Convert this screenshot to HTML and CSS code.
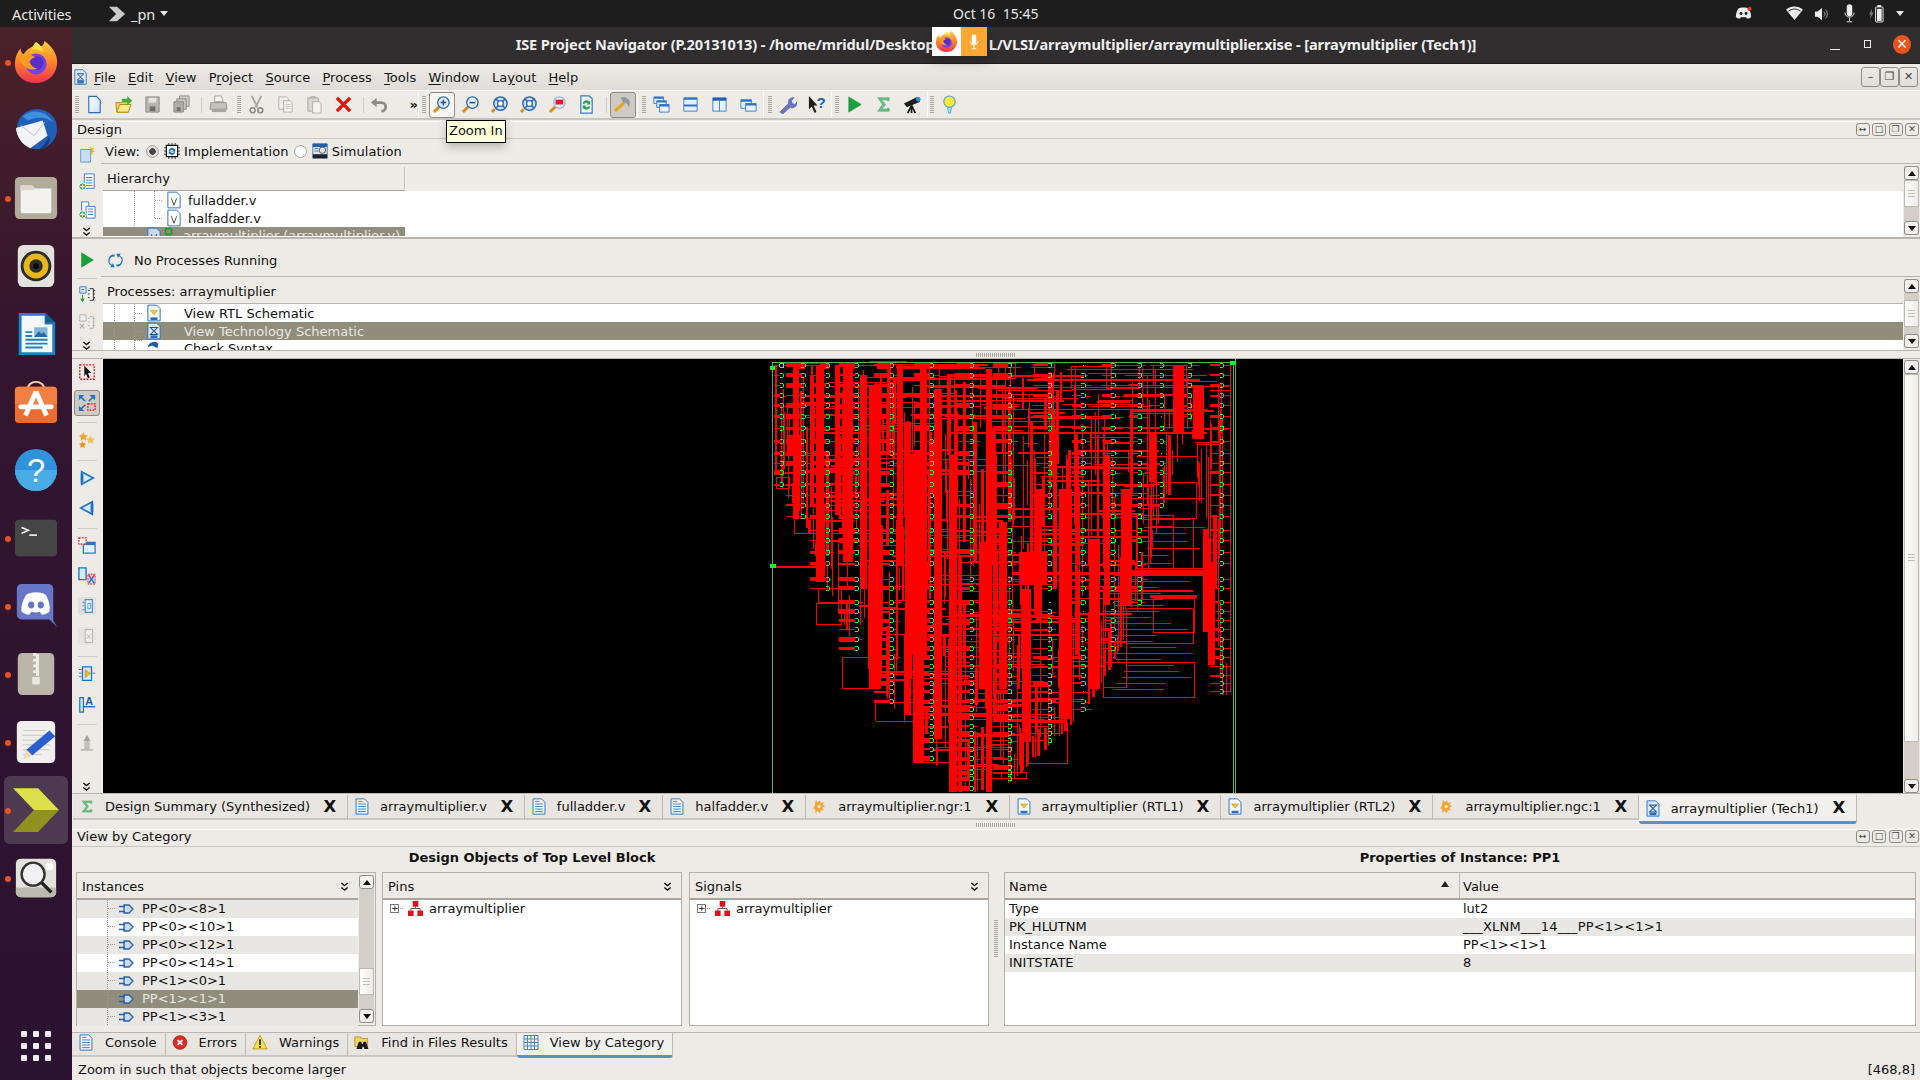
FILE: index.html
```html
<!DOCTYPE html>
<html lang="en">
<head>
<meta charset="utf-8">
<title>ISE Project Navigator</title>
<link rel="stylesheet" href="styles.css">
<script src="app.js" defer></script>
</head>
<body>
<svg class="defs" width="0" height="0" aria-hidden="true">
<defs>
<linearGradient id="gDoc" x1="0" y1="0" x2="1" y2="1"><stop offset="0" stop-color="#fff"/><stop offset="1" stop-color="#cfe0f5"/></linearGradient>
<linearGradient id="gFf" x1="0" y1="0" x2="0" y2="1"><stop offset="0" stop-color="#ffd23a"/><stop offset=".45" stop-color="#ff8a2a"/><stop offset="1" stop-color="#f0304f"/></linearGradient>
<symbol id="new" viewBox="0 0 20 20"><path d="M4 1.5h8l4 4v13H4z" fill="url(#gDoc)" stroke="#2a6fc4" stroke-width="1.2"/></symbol>
<symbol id="open" viewBox="0 0 20 20"><path d="M2 8h6l1-2h6v12H3z" fill="#f4d35e" stroke="#b08a1a"/><path d="M3 18l3-8h12l-3 8z" fill="#fbe88a" stroke="#b08a1a"/><path d="M8 4h6V1l5 5-5 5V8H9z" fill="#3fae3a"/></symbol>
<symbol id="save" viewBox="0 0 20 20"><path d="M3 2h14v16H3z" fill="#b9b6b0" stroke="#8f8c86"/><path d="M6 3h8v5H6z" fill="#e8e6e2"/><path d="M7 12h6v5H7z" fill="#6f6d68"/></symbol>
<symbol id="saveall" viewBox="0 0 20 20"><path d="M8 1h10v11H8z" fill="#cfccc6" stroke="#8f8c86"/><path d="M5 4h10v11H5z" fill="#c6c3bd" stroke="#8f8c86"/><path d="M2 7h10v11H2z" fill="#b0ada7" stroke="#8f8c86"/><path d="M5 13h4v4H5z" fill="#6f6d68"/></symbol>
<symbol id="print" viewBox="0 0 20 20"><path d="M6 1h7l2 6H6z" fill="#f2f1ee" stroke="#a7a49e"/><path d="M2 8h16l1 7H1z" fill="#c4c1bb" stroke="#98958f"/><path d="M3 15h15v3H3z" fill="#a8a59f"/></symbol>
<symbol id="cut" viewBox="0 0 20 20"><path d="M5 1l6 12M15 1L9 13" stroke="#a9a6a0" stroke-width="2" fill="none"/><circle cx="6" cy="16" r="2.6" fill="none" stroke="#8b8882" stroke-width="1.6"/><circle cx="14" cy="16" r="2.6" fill="none" stroke="#8b8882" stroke-width="1.6"/></symbol>
<symbol id="copy" viewBox="0 0 20 20"><path d="M3 2h8l2 2v11H3z" fill="#f2f1ee" stroke="#b1aea8"/><path d="M8 6h7l2 2v10H8z" fill="#f2f1ee" stroke="#b1aea8"/><path d="M10 10h5M10 12h5M10 14h5" stroke="#c5c2bc"/></symbol>
<symbol id="paste" viewBox="0 0 20 20"><path d="M3 3h11v14H3z" fill="#dad7d1" stroke="#aaa7a1"/><path d="M6 1h5v3H6z" fill="#bbb8b2"/><path d="M8 7h7l2 2v10H8z" fill="#f4f3f0" stroke="#b1aea8"/></symbol>
<symbol id="del" viewBox="0 0 20 20"><path d="M3 3l14 14M17 3L3 17" stroke="#e3140e" stroke-width="3.6" fill="none"/></symbol>
<symbol id="undo" viewBox="0 0 20 20"><path d="M5 8h7a4 4 0 0 1 0 9" stroke="#8e8b85" stroke-width="3" fill="none"/><path d="M7 3v10L1 8z" fill="#8e8b85"/></symbol>
<symbol id="zi" viewBox="0 0 20 20"><path d="M2 18l6-6" stroke="#dc8a1e" stroke-width="3"/><circle cx="12" cy="8" r="6" fill="#dfeafa" stroke="#2f6cb4" stroke-width="1.4"/><path d="M9 8h6M12 5v6" stroke="#24508c" stroke-width="1.6"/></symbol>
<symbol id="zo" viewBox="0 0 20 20"><path d="M2 18l6-6" stroke="#dc8a1e" stroke-width="3"/><circle cx="12" cy="8" r="6" fill="#dfeafa" stroke="#2f6cb4" stroke-width="1.4"/><path d="M9 8h6" stroke="#24508c" stroke-width="1.6"/></symbol>
<symbol id="fit" viewBox="0 0 20 20"><path d="M2 18l3-3" stroke="#dc8a1e" stroke-width="3"/><circle cx="11" cy="9" r="7" fill="#cfe0f5" stroke="#2f6cb4" stroke-width="1.6"/><circle cx="11" cy="9" r="3" fill="#fff" stroke="#2f6cb4" stroke-width="1.4"/><path d="M6 4l3 3M16 4l-3 3M6 14l3-3M16 14l-3-3" stroke="#2f6cb4" stroke-width="1.6"/></symbol>
<symbol id="zs" viewBox="0 0 20 20"><path d="M2 18l6-6" stroke="#dc8a1e" stroke-width="3"/><circle cx="12" cy="8" r="6" fill="#dfeafa" stroke="#9db8d8" stroke-width="1.4"/><path d="M8 5h8v5H8z" fill="#e8142a"/></symbol>
<symbol id="ref" viewBox="0 0 20 20"><path d="M4 1h9l3 3v15H4z" fill="#eef5fd" stroke="#3b7cc6" stroke-width="1.3"/><path d="M6 9a4 4 0 0 1 7-2l1-1v4h-4l1.400-1.400A2.500 2.500 0 0 0 7.500 10zM14 12a4 4 0 0 1-7 2l-1 1v-4h4l-1.400 1.400a2.500 2.500 0 0 0 3.400-.4z" fill="#2aa63c"/></symbol>
<symbol id="ham" viewBox="0 0 20 20"><path d="M2 17L13 7" stroke="#e5a51f" stroke-width="3.2"/><path d="M8 3c4-2 7-1 10 4l-1 6c-2-4-4-6-6-5z" fill="#8f9aa8"/></symbol>
<symbol id="wc" viewBox="0 0 20 20"><path d="M2 2h10v7H2z" fill="#e7f0fb" stroke="#3a80cf"/><path d="M5 6h10v7H5z" fill="#e7f0fb" stroke="#3a80cf"/><path d="M8 10h10v8H8z" fill="#e7f0fb" stroke="#3a80cf"/><path d="M2 2h10v2H2zM5 6h10v2H5zM8 10h10v2H8z" fill="#2f74c4"/></symbol>
<symbol id="wh" viewBox="0 0 20 20"><path d="M3 3h14v14H3z" fill="#e7f0fb" stroke="#3a80cf"/><path d="M3 3h14v2H3zM3 10h14v2H3z" fill="#2f74c4"/></symbol>
<symbol id="wv" viewBox="0 0 20 20"><path d="M3 3h14v14H3z" fill="#e7f0fb" stroke="#3a80cf"/><path d="M3 3h14v3H3z" fill="#1f5fb0"/><path d="M10 6v11" stroke="#3a80cf"/></symbol>
<symbol id="wa" viewBox="0 0 20 20"><path d="M2 5h11v9H2z" fill="#e7f0fb" stroke="#3a80cf"/><path d="M7 9h11v8H7z" fill="#e7f0fb" stroke="#3a80cf"/><path d="M2 5h11v2H2zM7 9h11v2H7z" fill="#2f74c4"/></symbol>
<symbol id="wr" viewBox="0 0 20 20"><path d="M2 18l9-9c-1-4 2-7 6-6l-3 3 1 3 3 1 2-3c1 4-3 8-7 6l-8 7z" fill="#6a74c4" stroke="#4c559c" stroke-width=".6"/></symbol>
<symbol id="hlp" viewBox="0 0 20 20"><path d="M2 1l9 10H7l3 7-2 1-3-7-3 3z" fill="#1d1d1d"/><text x="10" y="14" font-size="16" font-weight="700" font-family="Liberation Sans" fill="#1b5fb5">?</text></symbol>
<symbol id="play" viewBox="0 0 20 20"><path d="M4 2l13 8-13 8z" fill="#17a33a" stroke="#108030" stroke-width=".6"/></symbol>
<symbol id="sig" viewBox="0 0 20 20"><path d="M4 3h12v3h-2V5H8l4 5-4 5h6v-1h2v3H4l5-7z" fill="#6cc28a" stroke="#3a9c5e" stroke-width=".6"/></symbol>
<symbol id="scope" viewBox="0 0 20 20"><path d="M1 9l14-7 3 5-14 6z" fill="#1b1b1b"/><circle cx="16" cy="4.500" r="2.500" fill="#2a8fc6"/><path d="M9 11L5 19M9 11l0 8M9 11l4 8" stroke="#1b1b1b" stroke-width="1.800"/></symbol>
<symbol id="bulb" viewBox="0 0 20 20"><circle cx="10" cy="7" r="6" fill="#fde93a" stroke="#4aa3d8" stroke-width="1.200"/><path d="M8 13h4l-1 6H9z" fill="#bfe0f2" stroke="#4aa3d8"/></symbol>
<symbol id="note" viewBox="0 0 20 20"><path d="M3 5h11v14H3z" fill="#c9ddf3" stroke="#5c93cf"/><path d="M14 1l1 3 3-1-2 3 3 1-3 1 1 3-3-2z" fill="#f5a623"/></symbol>
<symbol id="adds" viewBox="0 0 20 20"><path d="M7 1h11v16H7z" fill="#fff" stroke="#2f74c4"/><path d="M9 5h7M9 8h7M9 11h7M9 14h7" stroke="#2f74c4"/><circle cx="5" cy="15" r="4" fill="#2aa63c" stroke="#fff"/><path d="M2.500 15h5M5 12.500v5" stroke="#fff" stroke-width="1.400"/></symbol>
<symbol id="addc" viewBox="0 0 20 20"><path d="M4 1h8v12H4z" fill="#fff" stroke="#2f74c4"/><path d="M9 6h10v13H9z" fill="#fff" stroke="#2f74c4"/><path d="M11 9h6M11 12h6M11 15h6" stroke="#2f74c4"/><circle cx="5" cy="15" r="4" fill="#2aa63c" stroke="#fff"/><path d="M2.500 15h5M5 12.500v5" stroke="#fff" stroke-width="1.400"/></symbol>
<symbol id="chev" viewBox="0 0 10 10"><path d="M1.500 1L5 4l3.500-3M1.500 6L5 9l3.500-3" stroke="#111" stroke-width="1.500" fill="none"/></symbol>
<symbol id="sync" viewBox="0 0 20 20"><path d="M9 3A7 7 0 0 0 5 16l-1 2 5 0-2-5-1 2A5 5 0 0 1 9 5.500z" fill="#1e72c4"/><path d="M11 17a7 7 0 0 0 4-13l1-2-5 0 2 5 1-2a5 5 0 0 1-3 9.500z" fill="#1e72c4"/></symbol>
<symbol id="p1" viewBox="0 0 20 20"><path d="M2 2h7v7H2z" fill="#dcebfb" stroke="#2f74c4"/><path d="M4 5h3" stroke="#2f74c4"/><path d="M13 4h4v13h-4" fill="#f3f3f3" stroke="#222"/><path d="M11 6h2M11 10h2M11 14h2M17 6h2M17 10h2M17 14h2" stroke="#222"/><path d="M5 11v6M3 15l2 3 2-3" stroke="#18a23a" fill="none" stroke-width="1.300"/></symbol>
<symbol id="p2" viewBox="0 0 20 20"><path d="M2 2h7v7H2z" fill="#eee" stroke="#aaa"/><path d="M13 4h4v13h-4" fill="#eee" stroke="#aaa"/><path d="M11 6h2M11 10h2M11 14h2M17 6h2M17 10h2M17 14h2" stroke="#aaa"/><path d="M2 12l5 5M7 12l-5 5" stroke="#aaa" stroke-width="1.300"/></symbol>
<symbol id="sel" viewBox="0 0 20 20"><path d="M2 2h16v16H2z" fill="none" stroke="#e01818" stroke-width="1.500" stroke-dasharray="2 1.500"/><path d="M7 3l8 8h-4l2 5-2 1-2-5-2 3z" fill="#111"/></symbol>
<symbol id="net" viewBox="0 0 20 20"><path d="M3 3l5 5M17 3l-5 5M3 17l5-5" stroke="#1e72c4" stroke-width="1.800"/><path d="M1 1h6L1 7zM19 1h-6l6 6zM1 19h6l-6-6z" fill="#1e72c4"/><path d="M11 11h8v7h-8z" fill="none" stroke="#e01818" stroke-dasharray="2 1.200" stroke-width="1.400"/></symbol>
<symbol id="stars" viewBox="0 0 20 20"><path d="M6 1l1.500 3.500L11 5 8.500 7.500 9 11 6 9 3 11l.5-3.500L1 5l3.500-.5z" fill="#f0a530"/><path d="M14 5l1.500 3L19 8.500 16.500 11l.5 3-3-1.500-3 1.500.5-3L9 8.500l3.500-.5z" fill="#f6c04a"/><path d="M5 11l1.200 2.500 2.800.5-2 2 .5 3L5 17.500 2.500 19l.5-3-2-2 2.800-.5z" fill="#ec8f24"/></symbol>
<symbol id="gr" viewBox="0 0 20 20"><path d="M4 3l13 7-13 7z" fill="#d8e8fb" stroke="#1e72c4" stroke-width="1.800"/><path d="M3 5h3v10H3z" fill="#1e72c4"/></symbol>
<symbol id="gl" viewBox="0 0 20 20"><path d="M16 3L3 10l13 7z" fill="#d8e8fb" stroke="#1e72c4" stroke-width="1.800"/><path d="M14 5h3v10h-3z" fill="#1e72c4"/></symbol>
<symbol id="ws" viewBox="0 0 20 20"><path d="M6 6h13v12H6z" fill="#e7f0fb" stroke="#2f74c4" stroke-width="1.400"/><path d="M6 6h13v3H6z" fill="#2f74c4"/><path d="M1 1h8v7H1z" fill="#fff" stroke="#e01818" stroke-dasharray="2 1.200" stroke-width="1.300"/></symbol>
<symbol id="wx" viewBox="0 0 20 20"><path d="M1 1h8v13H1z" fill="#d8e8fb" stroke="#1e72c4" stroke-width="1.500"/><path d="M11 8h8v11h-8z" fill="#f2c7c0" stroke="#e01818" stroke-dasharray="2 1.200"/><path d="M12 9l6 9M18 9l-6 9" stroke="#2f5ea8" stroke-width="1.300"/></symbol>
<symbol id="ga1" viewBox="0 0 20 20"><path d="M0 0h20v20H0z" fill="#e2e0dc"/><path d="M5 6h2M5 10h2M5 14h2" stroke="#4c8fd2" stroke-width="1.300"/><path d="M8 3h8v14H8z" fill="#e8f2fc" stroke="#4c8fd2" stroke-width="1.300"/><path d="M11 7h3v6h-3z" fill="none" stroke="#4c8fd2"/></symbol>
<symbol id="ga2" viewBox="0 0 20 20"><path d="M0 0h20v20H0z" fill="#e6e4e0"/><path d="M8 3h8v14H8z" fill="#f0f0ee" stroke="#bdbbb6" stroke-width="1.300"/><path d="M10 8l4 5M14 8l-4 5" stroke="#bdbbb6"/></symbol>
<symbol id="blk" viewBox="0 0 20 20"><path d="M1 5h3M1 9h3M1 13h3M16 9h3" stroke="#1e72c4"/><path d="M5 2h10v15H5z" fill="#dbe9f9" stroke="#1e72c4" stroke-width="1.400"/><path d="M8 5l6 4.500L8 14z" fill="#eeb91f" stroke="#a9831a" stroke-width=".6"/></symbol>
<symbol id="att" viewBox="0 0 20 20"><path d="M2 3h4v16H2z" fill="#d8e8fb" stroke="#1e72c4" stroke-width="1.400"/><path d="M6 13h13" stroke="#1e72c4" stroke-width="1.600"/><text x="8" y="11" font-size="12" font-weight="700" font-family="Liberation Sans" fill="#1e5ea8">A</text></symbol>
<symbol id="fade" viewBox="0 0 20 20"><path d="M7 9h6v9H7z" fill="#c2c0ba"/><path d="M6 9l4-7 4 7z" fill="#a6a39d"/><path d="M3 18h14v1.500H3z" fill="#aeaba5"/></symbol>
<symbol id="lines" viewBox="0 0 16 20"><path d="M1 1h10l4 4v14H1z" fill="#eef5fd" stroke="#2f74c4" stroke-width="1.100"/><path d="M3.500 7h9M3.500 10h9M3.500 13h9M3.500 16h9M3.500 4h5" stroke="#2f74c4"/></symbol>
<symbol id="vfile" viewBox="0 0 16 20"><path d="M1 1h10l4 4v14H1z" fill="#fff" stroke="#2a6fc4" stroke-width="1.100"/><path d="M5 8l3 8 3-8" stroke="#333" fill="none"/></symbol>
<symbol id="vsel" viewBox="0 0 16 20"><path d="M1 1h10l4 4v14H1z" fill="#c8d8ec" stroke="#2a6fc4" stroke-width="1.100"/><path d="M5 8l3 8 3-8" stroke="#333" fill="none"/></symbol>
<symbol id="chip" viewBox="0 0 10 10"><path d="M2 2h6v6H2z" fill="none" stroke="#13a018" stroke-width="1.400"/><path d="M0 3h2M0 7h2M8 3h2M8 7h2M3 0v2M7 0v2M3 8v2M7 8v2" stroke="#13a018"/></symbol>
<symbol id="rtl" viewBox="0 0 16 20"><path d="M1 1h10l4 4v14H1z" fill="#f4f8fd" stroke="#2a6fc4" stroke-width="1.100"/><path d="M4 7h8L8 12z" fill="#f3c52c" stroke="#b78b12" stroke-width=".6"/><path d="M4 15h8v3H4z" fill="#2a6fc4"/></symbol>
<symbol id="tech" viewBox="0 0 16 20"><path d="M1 1h10l4 4v14H1z" fill="#dceafa" stroke="#2a6fc4" stroke-width="1.100"/><path d="M4 6h8L4 14h8z" fill="none" stroke="#1e4f94" stroke-width="1.200"/><path d="M4 15h8v3H4z" fill="#2a6fc4"/></symbol>
<symbol id="gear" viewBox="0 0 16 20"><path d="M3 2l2 3 3-2 1 3 4-1-2 3 3 2-3 1 1 4-3-1-1 4-3-3-2 3-1-5-2-1 2-3z" fill="#f2a43a"/><circle cx="7" cy="10" r="2" fill="#fbe4b0"/></symbol>
<symbol id="check" viewBox="0 0 16 20"><path d="M1 8a7 7 0 0 1 12-4l-1 5-6-3z" fill="#1e5ea8"/><path d="M13 14v6H3" stroke="#1e5ea8" fill="none"/></symbol>
<symbol id="err" viewBox="0 0 20 20"><circle cx="10" cy="10" r="8.500" fill="#e22a24" stroke="#a81510"/><path d="M7 7l6 6M13 7l-6 6" stroke="#fff" stroke-width="2.200"/></symbol>
<symbol id="warn" viewBox="0 0 20 20"><path d="M10 1l9 17H1z" fill="#fde23a" stroke="#a8921a"/><path d="M10 6v7M10 14.500v2" stroke="#111" stroke-width="2"/></symbol>
<symbol id="find" viewBox="0 0 20 20"><path d="M1 3h7l1 2h8v10H1z" fill="#f4d35e" stroke="#b08a1a"/><path d="M6 9h3l1 3h1l1-3h3l3 9h-5l-1-3h-1l-1 3H3z" fill="#1b1b1b"/></symbol>
<symbol id="grid" viewBox="0 0 16 16"><path d="M1 1h14v14H1z" fill="#f3f7fd" stroke="#4e87c7"/><path d="M1 4.500h14M1 8h14M1 11.500h14M4.500 1v14M8 1v14M11.500 1v14" stroke="#4e87c7"/></symbol>
<symbol id="gate" viewBox="0 0 16 12"><path d="M5 2h5l4 4-4 4H5z" fill="#c8dcf4" stroke="#2a5eaa" stroke-width="1.300"/><path d="M0 3.500h6M0 8.500h6" stroke="#2a5eaa" stroke-width="1.300"/></symbol>
<symbol id="hier" viewBox="0 0 16 16"><path d="M5 0h6v6H5zM0 10h6v6H0zM10 10h6v6h-6z" fill="#e2101c"/><path d="M8 6v2M3 10V8h10v2" stroke="#555" fill="none"/></symbol>
<symbol id="impl" viewBox="0 0 20 20"><path d="M3 3h14v14H3z" fill="#fff" stroke="#111" stroke-width="1.500"/><path d="M6 0v3M10 0v3M14 0v3M6 17v3M10 17v3M14 17v3M0 6h3M0 10h3M0 14h3M17 6h3M17 10h3M17 14h3" stroke="#111"/><path d="M6 10a4 4 0 0 1 7-2.500l1-1v4h-4l1.300-1.400A2.300 2.300 0 0 0 7.500 10.500zM14 11a4 4 0 0 1-7 2.500l-1 1v-4h4l-1.300 1.400A2.300 2.300 0 0 0 12.500 10.500z" fill="#1e72c4"/></symbol>
<symbol id="simu" viewBox="0 0 20 20"><path d="M1 1h18v18H1z" fill="#dfe9f5" stroke="#36639a"/><path d="M1 1h18v4H1z" fill="#1e5fa8"/><circle cx="13" cy="9" r="4" fill="#e6e6e6" stroke="#333"/><path d="M3 7h5M3 10h5" stroke="#1e5fa8"/><path d="M1 14h18v5H1z" fill="#20242a"/></symbol>
<symbol id="fox" viewBox="0 0 48 48"><path d="M24 6c6 4 8 0 9-4 5 4 12 10 13 20 1 14-9 24-22 24S1 37 2 24c.5-6 3-11 6-14 0 3 1 5 3 6 3-5 8-8 13-10z" fill="url(#gFf)"/><circle cx="24" cy="26" r="11" fill="#7542e5"/><circle cx="25" cy="25" r="7" fill="#5a2cc8"/><path d="M6 20c5-5 12-5 17-1-3 1-5 3-6 4 1 4 4 7 8 8-8 3-16-3-19-11z" fill="#ff9a1f"/><path d="M24 3c5 3 7 7 7 11-3-3-7-4-11-3 0-3 2-6 4-8z" fill="#ffe14a"/></symbol>
<symbol id="tbird" viewBox="0 0 48 48"><circle cx="25" cy="23" r="21" fill="#1f5fb8"/><path d="M10 10c8-8 24-8 32 6-8-6-18-6-26-2z" fill="#3f8fe0"/><path d="M3 22l28-8 5 16-18 13C10 40 4 32 3 22z" fill="#f3f4f7"/><path d="M8 19l14 11 11-14" fill="none" stroke="#b9c2d4"/><path d="M38 30c2 8-4 14-12 15 6-4 9-9 12-15z" fill="#173c86"/></symbol>
<symbol id="files" viewBox="0 0 48 48"><rect x="2" y="2" width="44" height="44" rx="5" fill="#b1ab9c"/><path d="M8 11h12l3 3h17v24a2 2 0 0 1-2 2H10a2 2 0 0 1-2-2z" fill="#f4f2ee"/><path d="M8 11h12l3 5H8z" fill="#dcd8d0"/></symbol>
<symbol id="rhy" viewBox="0 0 48 48"><rect x="5" y="2" width="38" height="44" rx="6" fill="#e4e2dc"/><circle cx="24" cy="24" r="16" fill="#2d2d2d"/><circle cx="24" cy="24" r="13" fill="#e8b81a"/><circle cx="24" cy="24" r="7" fill="#2d2d2d"/><circle cx="24" cy="24" r="3" fill="#000"/></symbol>
<symbol id="wrt" viewBox="0 0 48 48"><path d="M6 2h28l10 10v34H6z" fill="#1b82c4"/><path d="M9 5h24v9h8v29H9z" fill="#f5f8fb"/><path d="M34 2l10 10H34z" fill="#0f5c93"/><path d="M13 22h7M13 26h7M13 30h23M13 34h23M13 38h18" stroke="#1b82c4" stroke-width="2"/><path d="M22 17h14v10H22z" fill="#7fb6dc"/><path d="M22 27l5-6 3 3 2-2 4 5z" fill="#2c6a96"/></symbol>
<symbol id="shop" viewBox="0 0 48 48"><path d="M15 12c0-12 18-12 18 0" fill="none" stroke="#f2d5b0" stroke-width="2"/><rect x="2" y="8" width="44" height="38" rx="4" fill="#ee6c2c"/><path d="M2 12a4 4 0 0 1 4-4h36a4 4 0 0 1 4 4v14H2z" fill="#f38042"/><path d="M24 13L13 38M24 13l11 25" stroke="#fff" stroke-width="5" fill="none"/><path d="M8 29h32" stroke="#fff" stroke-width="5" stroke-linecap="round"/></symbol>
<symbol id="help" viewBox="0 0 48 48"><circle cx="24" cy="24" r="22" fill="#2f94dc"/><path d="M2 24a22 22 0 0 0 44 0z" fill="#49ace6"/><text x="24" y="36" font-size="34" text-anchor="middle" font-family="Liberation Sans" fill="#fff">?</text></symbol>
<symbol id="term" viewBox="0 0 48 48"><rect x="2" y="5" width="44" height="38" rx="4" fill="#454545"/><path d="M9 13l7 3-7 3" stroke="#fff" fill="none" stroke-width="1.600"/><path d="M17 21h8" stroke="#fff" stroke-width="1.600"/></symbol>
<symbol id="disc" viewBox="0 0 48 48"><path d="M4 6a5 5 0 0 1 5-5h28a5 5 0 0 1 5 5v33l4 7-8-8H9a5 5 0 0 1-5-5z" fill="#6577c6"/><path d="M14 12c6-3 14-3 20 0 3 5 5 11 4 18-3 2-5 3-8 3l-2-3c-3 1-6 1-9 0l-2 3c-3 0-5-1-8-3-1-7 2-13 5-18z" fill="#fff"/><ellipse cx="19" cy="23" rx="3.200" ry="3.600" fill="#6577c6"/><ellipse cx="29" cy="23" rx="3.200" ry="3.600" fill="#6577c6"/></symbol>
<symbol id="arc" viewBox="0 0 48 48"><rect x="5" y="2" width="38" height="44" rx="5" fill="#b9b5a8"/><path d="M24 2h-3v3h3v3h-3v3h3v3h-3v3h3v3h-3v3h3v3h3V3h-3z" fill="#f0eee8"/><rect x="20" y="27" width="8" height="8" rx="1" fill="#e9e7e1"/></symbol>
<symbol id="ged" viewBox="0 0 48 48"><rect x="4" y="2" width="40" height="44" rx="5" fill="#f0efed"/><path d="M10 12h24M10 17h28M10 22h28M10 27h28M10 32h28M10 37h20" stroke="#c9c8c4"/><path d="M38 12l6 6-24 20-6-6z" fill="#2a5fd0"/><path d="M14 32l6 6-9 4z" fill="#efd8b4"/></symbol>
<symbol id="xil" viewBox="0 0 48 48"><path d="M2 3h24l20 21H22z" fill="#dde04c"/><path d="M2 45h24l20-21H22z" fill="#8f9120"/></symbol>
<symbol id="mag" viewBox="0 0 48 48"><rect x="3" y="4" width="42" height="40" rx="5" fill="#e4e2dc"/><path d="M3 34h42v5a5 5 0 0 1-5 5H8a5 5 0 0 1-5-5z" fill="#bdbab0"/><circle cx="21" cy="20" r="12" fill="#f2f2f2" stroke="#333" stroke-width="2.500"/><path d="M30 29l10 10" stroke="#222" stroke-width="3.500"/><circle cx="38" cy="12" r="4" fill="#fff"/></symbol>
<symbol id="pnarrow" viewBox="0 0 22 20"><path d="M2 2h9l9 8-9 8H2l8-8z" fill="#c9c9c9"/></symbol>
<symbol id="mic" viewBox="0 0 16 24"><rect x="5" y="2" width="6" height="13" rx="3" fill="#fff"/><path d="M3 11a5 5 0 0 0 10 0M8 16v5M5 21h6" stroke="#fff" fill="none" stroke-width="1.300"/></symbol>
<symbol id="tdisc" viewBox="0 0 20 16"><path d="M4 2c3-1.500 9-1.500 12 0 2 3 3 7 3 10-2 2-4 2-5 2l-1-2c-2 .5-4 .5-6 0l-1 2c-1 0-3 0-5-2 0-3 1-7 3-10z" fill="#eee"/><circle cx="7" cy="8" r="1.700" fill="#1d1d1d"/><circle cx="13" cy="8" r="1.700" fill="#1d1d1d"/><circle cx="17" cy="2.500" r="2.500" fill="#e9322b"/></symbol>
<symbol id="wifi" viewBox="0 0 18 16"><path d="M0 4c5-4.500 13-4.500 18 0L9 15z" fill="#eee"/><path d="M2.500 5.500c4-3 9-3 13 0" stroke="#1d1d1d" fill="none"/></symbol>
<symbol id="vol" viewBox="0 0 18 16"><path d="M1 5h3l5-4v14l-5-4H1z" fill="#eee"/><path d="M11 5a4 4 0 0 1 0 6M13 3a7 7 0 0 1 0 10" stroke="#aaa" fill="none"/></symbol>
<symbol id="tmic" viewBox="0 0 12 20"><rect x="3" y="0" width="6" height="13" rx="3" fill="#eee"/><path d="M1 9a5 5 0 0 0 10 0M6 15v3M3 19h6" stroke="#eee" fill="none"/></symbol>
<symbol id="batt" viewBox="0 0 16 20"><path d="M3 5l-3 6h2l-1 5 4-7H3z" fill="#777"/><rect x="7" y="3" width="8" height="16" rx="1" fill="none" stroke="#eee"/><rect x="9" y="1" width="4" height="2" fill="#eee"/><rect x="8.500" y="5" width="5" height="13" fill="#eee"/></symbol>
</defs>
</svg>

<header class="topbar">
  <div class="tb-left">
    <span class="activities">Activities</span>
    <svg class="pn-arrow"><use href="#pnarrow"/></svg>
    <span class="pn">_pn</span>
    <span class="caret"></span>
  </div>
  <div class="clock">Oct 16&nbsp; 15:45</div>
  <div class="tray">
    <svg class="t-discord"><use href="#tdisc"/></svg>
    <svg class="t-wifi"><use href="#wifi"/></svg>
    <svg class="t-vol"><use href="#vol"/></svg>
    <svg class="t-mic"><use href="#tmic"/></svg>
    <svg class="t-batt"><use href="#batt"/></svg>
    <span class="caret"></span>
  </div>
</header>

<div class="desktop">
  <nav class="dock">
    <div class="dk dot"><svg class="dk-i"><use href="#fox"/></svg></div>
    <div class="dk"><svg class="dk-i"><use href="#tbird"/></svg></div>
    <div class="dk dot"><svg class="dk-i"><use href="#files"/></svg></div>
    <div class="dk"><svg class="dk-i"><use href="#rhy"/></svg></div>
    <div class="dk"><svg class="dk-i"><use href="#wrt"/></svg></div>
    <div class="dk"><svg class="dk-i"><use href="#shop"/></svg></div>
    <div class="dk"><svg class="dk-i"><use href="#help"/></svg></div>
    <div class="dk dot"><svg class="dk-i"><use href="#term"/></svg></div>
    <div class="dk dot"><svg class="dk-i"><use href="#disc"/></svg></div>
    <div class="dk dot"><svg class="dk-i"><use href="#arc"/></svg></div>
    <div class="dk dot"><svg class="dk-i"><use href="#ged"/></svg></div>
    <div class="dk dot active"><svg class="dk-i"><use href="#xil"/></svg></div>
    <div class="dk dot"><svg class="dk-i"><use href="#mag"/></svg></div>
    <div class="apps"><i></i><i></i><i></i><i></i><i></i><i></i><i></i><i></i><i></i></div>
  </nav>

  <main class="window">
    <div class="titlebar">
      <span></span>
      <div class="title">ISE Project Navigator (P.20131013) - /home/mridul/Desktop<span class="title-gap">/VHD</span>L/VLSI/arraymultiplier/arraymultiplier.xise - [arraymultiplier (Tech1)]</div>
      <div class="wctl"><span class="w-min"></span><span class="w-max"></span><span class="w-close">×</span></div>
      <div class="indicator"><span class="ind-fox"><svg class="ind-svg"><use href="#fox"/></svg></span><span class="ind-mic"><svg class="ind-micsvg"><use href="#mic"/></svg></span></div>
    </div>

    <div class="menubar">
      <svg class="menu-app"><use href="#tech"/></svg>
      <span class="m m1"><u>F</u>ile</span><span class="m"><u>E</u>dit</span><span class="m"><u>V</u>iew</span><span class="m">P<u>r</u>oject</span><span class="m"><u>S</u>ource</span><span class="m"><u>P</u>rocess</span><span class="m"><u>T</u>ools</span><span class="m"><u>W</u>indow</span><span class="m">La<u>y</u>out</span><span class="m"><u>H</u>elp</span>
      <div class="mdi"><span class="mdi-b">–</span><span class="mdi-b">❐</span><span class="mdi-b">✕</span></div>
    </div>

    <div class="toolbar">
      <div class="tg tg1"><i class="grip"></i><span class="tc"><svg><use href="#new"/></svg></span><span class="tc"><svg><use href="#open"/></svg></span><span class="tc"><svg><use href="#save"/></svg></span><span class="tc"><svg><use href="#saveall"/></svg></span><i class="tsep"></i><span class="tc"><svg><use href="#print"/></svg></span></div>
      <div class="tg tg2"><i class="grip"></i><span class="tc"><svg><use href="#cut"/></svg></span><span class="tc"><svg><use href="#copy"/></svg></span><span class="tc"><svg><use href="#paste"/></svg></span><span class="tc"><svg><use href="#del"/></svg></span><i class="tsep"></i><span class="tc"><svg><use href="#undo"/></svg></span><span class="more">»</span></div>
      <div class="tg tg3"><i class="grip"></i><span class="tc"><b class="hot"><svg><use href="#zi"/></svg></b></span><span class="tc"><svg><use href="#zo"/></svg></span><span class="tc"><svg><use href="#fit"/></svg></span><span class="tc"><svg><use href="#fit"/></svg></span><span class="tc"><svg><use href="#zs"/></svg></span><span class="tc"><svg><use href="#ref"/></svg></span><i class="tsep"></i><span class="tc"><b class="on"><svg><use href="#ham"/></svg></b></span></div>
      <div class="tg tg4"><i class="grip"></i><span class="tc"><svg><use href="#wc"/></svg></span><span class="tc"><svg><use href="#wh"/></svg></span><span class="tc"><svg><use href="#wv"/></svg></span><span class="tc"><svg><use href="#wa"/></svg></span></div>
      <div class="tg tg4"><i class="grip"></i><span class="tc"><svg><use href="#wr"/></svg></span><span class="tc"><svg><use href="#hlp"/></svg></span></div>
      <div class="tg tg6"><i class="grip"></i><span class="tc"><svg><use href="#play"/></svg></span><span class="tc"><svg><use href="#sig"/></svg></span><span class="tc"><svg><use href="#scope"/></svg></span></div>
      <div class="tg tg7"><i class="grip"></i><span class="tc"><svg><use href="#bulb"/></svg></span></div>
      <div class="tooltip">Zoom In</div>
    </div>

    <div class="dock-head"><span>Design</span><div class="dbtns"><i>↔</i><i>□</i><i>❐</i><i>✕</i></div></div>

    <section class="row-a">
      <aside class="tools t-a">
        <svg class="ti"><use href="#note"/></svg>
        <svg class="ti"><use href="#adds"/></svg>
        <svg class="ti"><use href="#addc"/></svg>
        <svg class="chev"><use href="#chev"/></svg>
      </aside>
      <div class="col">
        <div class="viewrow">
          <span>View:</span>
          <span class="radio checked"></span>
          <svg class="vi"><use href="#impl"/></svg>
          <span>Implementation</span>
          <span class="radio"></span>
          <svg class="vi"><use href="#simu"/></svg>
          <span>Simulation</span>
        </div>
        <div class="treebox tb-h">
          <div class="tree">
            <div class="thead thead-short"><span>Hierarchy</span></div>
            <div class="trow"><i class="g g1"></i><i class="g g2"></i><i class="stub"></i><svg class="fi"><use href="#vfile"/></svg><span>fulladder.v</span></div>
            <div class="trow"><i class="g g1"></i><i class="g g2 half"></i><i class="stub"></i><svg class="fi"><use href="#vfile"/></svg><span>halfadder.v</span></div>
            <div class="trow selrow short"><svg class="fi-s"><use href="#vsel"/></svg><svg class="chip"><use href="#chip"/></svg><span>arraymultiplier (arraymultiplier.v)</span></div>
          </div>
          <div class="vscroll vs-h"><b class="up"></b><i class="thumb"></i><i class="trough"></i><b class="dn"></b></div>
        </div>
      </div>
    </section>

    <section class="row-b">
      <aside class="tools t-b">
        <svg class="ti"><use href="#play"/></svg>
        <i class="ssep"></i>
        <svg class="ti"><use href="#p1"/></svg>
        <svg class="ti"><use href="#p2"/></svg>
        <svg class="chev"><use href="#chev"/></svg>
      </aside>
      <div class="col">
        <div class="procstat"><svg class="vi"><use href="#sync"/></svg><span>No Processes Running</span></div>
        <div class="treebox tb-p">
          <div class="tree">
            <div class="thead"><span>Processes: arraymultiplier</span></div>
            <div class="trow"><i class="g gp1"></i><i class="g gp2"></i><i class="stub"></i><svg class="fi fi-p"><use href="#rtl"/></svg><span class="pt">View RTL Schematic</span></div>
            <div class="trow selrow"><i class="g gp1"></i><i class="g gp2"></i><i class="stub"></i><svg class="fi fi-p"><use href="#tech"/></svg><span class="pt">View Technology Schematic</span></div>
            <div class="trow clip"><i class="g gp1"></i><i class="g gp2"></i><i class="stub"></i><svg class="fi fi-p"><use href="#check"/></svg><span class="pt">Check Syntax</span></div>
          </div>
          <div class="vscroll vs-p"><b class="up"></b><i class="trough t7"></i><i class="thumb"></i><i class="trough"></i><b class="dn"></b></div>
        </div>
      </div>
    </section>

    <div class="splitter"><i class="hgrip"></i></div>

    <section class="row-c">
      <aside class="tools t-c">
        <svg class="ti"><use href="#sel"/></svg>
        <b class="ti-on"><svg class="ti"><use href="#net"/></svg></b>
        <i class="ssep"></i>
        <svg class="ti"><use href="#stars"/></svg>
        <i class="ssep"></i>
        <svg class="ti"><use href="#gr"/></svg>
        <svg class="ti"><use href="#gl"/></svg>
        <i class="ssep"></i>
        <svg class="ti"><use href="#ws"/></svg>
        <svg class="ti"><use href="#wx"/></svg>
        <svg class="ti"><use href="#ga1"/></svg>
        <svg class="ti"><use href="#ga2"/></svg>
        <i class="ssep"></i>
        <svg class="ti"><use href="#blk"/></svg>
        <svg class="ti"><use href="#att"/></svg>
        <i class="ssep"></i>
        <svg class="ti"><use href="#fade"/></svg>
        <svg class="chev chev-end"><use href="#chev"/></svg>
      </aside>
      <div class="canvas" id="canvas"></div>
      <div class="vscroll vs-c"><b class="up"></b><i class="thumb"></i><i class="trough"></i><b class="dn"></b></div>
    </section>

    <div class="tabs">
      <div class="tab"><svg class="tab-i"><use href="#sig"/></svg><span>Design Summary (Synthesized)</span><b class="x">X</b></div>
      <div class="tab"><svg class="tab-i"><use href="#lines"/></svg><span>arraymultiplier.v</span><b class="x">X</b></div>
      <div class="tab"><svg class="tab-i"><use href="#lines"/></svg><span>fulladder.v</span><b class="x">X</b></div>
      <div class="tab"><svg class="tab-i"><use href="#lines"/></svg><span>halfadder.v</span><b class="x">X</b></div>
      <div class="tab"><svg class="tab-i"><use href="#gear"/></svg><span>arraymultiplier.ngr:1</span><b class="x">X</b></div>
      <div class="tab"><svg class="tab-i"><use href="#rtl"/></svg><span>arraymultiplier (RTL1)</span><b class="x">X</b></div>
      <div class="tab"><svg class="tab-i"><use href="#rtl"/></svg><span>arraymultiplier (RTL2)</span><b class="x">X</b></div>
      <div class="tab"><svg class="tab-i"><use href="#gear"/></svg><span>arraymultiplier.ngc:1</span><b class="x">X</b></div>
      <div class="tab tab-on"><svg class="tab-i"><use href="#tech"/></svg><span>arraymultiplier (Tech1)</span><b class="x">X</b></div>
    </div>

    <div class="splitter2"><i class="hgrip"></i></div>

    <div class="dock-head dh2"><span>View by Category</span><div class="dbtns"><i>↔</i><i>□</i><i>❐</i><i>✕</i></div></div>

    <section class="vbc">
      <div class="vbc-col">
        <h2>Design Objects of Top Level Block</h2>
        <div class="panes">
          <div class="pane pane-i">
            <div class="pane-main">
              <div class="phead"><span>Instances</span><svg class="pchev"><use href="#chev"/></svg></div>
              <div class="irow alt"><i class="g gi"></i><i class="stub stub-i"></i><svg class="gt"><use href="#gate"/></svg><span>PP&lt;0&gt;&lt;8&gt;1</span></div>
              <div class="irow"><i class="g gi"></i><i class="stub stub-i"></i><svg class="gt"><use href="#gate"/></svg><span>PP&lt;0&gt;&lt;10&gt;1</span></div>
              <div class="irow alt"><i class="g gi"></i><i class="stub stub-i"></i><svg class="gt"><use href="#gate"/></svg><span>PP&lt;0&gt;&lt;12&gt;1</span></div>
              <div class="irow"><i class="g gi"></i><i class="stub stub-i"></i><svg class="gt"><use href="#gate"/></svg><span>PP&lt;0&gt;&lt;14&gt;1</span></div>
              <div class="irow alt"><i class="g gi"></i><i class="stub stub-i"></i><svg class="gt"><use href="#gate"/></svg><span>PP&lt;1&gt;&lt;0&gt;1</span></div>
              <div class="irow selrow"><i class="g gi"></i><i class="stub stub-i"></i><svg class="gt"><use href="#gate"/></svg><span>PP&lt;1&gt;&lt;1&gt;1</span></div>
              <div class="irow alt"><i class="g gi"></i><i class="stub stub-i"></i><svg class="gt"><use href="#gate"/></svg><span>PP&lt;1&gt;&lt;3&gt;1</span></div>
            </div>
            <div class="vscroll vs-i"><b class="up"></b><i class="trough t79"></i><i class="thumb"></i><i class="trough"></i><b class="dn"></b></div>
          </div>
          <div class="pane">
            <div class="pane-main white">
              <div class="phead"><span>Pins</span><svg class="pchev"><use href="#chev"/></svg></div>
              <div class="nrow"><i class="plus">+</i><i class="stub stub-n"></i><svg class="hr"><use href="#hier"/></svg><span>arraymultiplier</span></div>
            </div>
          </div>
          <div class="pane">
            <div class="pane-main white">
              <div class="phead"><span>Signals</span><svg class="pchev"><use href="#chev"/></svg></div>
              <div class="nrow"><i class="plus">+</i><i class="stub stub-n"></i><svg class="hr"><use href="#hier"/></svg><span>arraymultiplier</span></div>
            </div>
          </div>
        </div>
      </div>
      <i class="vgrip"></i>
      <div class="vbc-col">
        <h2>Properties of Instance: PP1</h2>
        <div class="pane pane-prop">
          <div class="phead prophead"><span class="pn-name">Name<b class="sort"></b></span><span class="pn-val">Value</span></div>
          <div class="prow"><span>Type</span><span>lut2</span></div>
          <div class="prow alt"><span>PK_HLUTNM</span><span class="hlut">___XLNM___14___PP&lt;1&gt;&lt;1&gt;1</span></div>
          <div class="prow"><span>Instance Name</span><span>PP&lt;1&gt;&lt;1&gt;1</span></div>
          <div class="prow alt"><span>INITSTATE</span><span>8</span></div>
        </div>
      </div>
    </section>

    <div class="btabs">
      <div class="btab"><svg class="tab-i"><use href="#lines"/></svg><span>Console</span></div>
      <div class="btab"><svg class="tab-i"><use href="#err"/></svg><span>Errors</span></div>
      <div class="btab"><svg class="tab-i"><use href="#warn"/></svg><span>Warnings</span></div>
      <div class="btab"><svg class="tab-i"><use href="#find"/></svg><span>Find in Files Results</span></div>
      <div class="btab btab-on"><svg class="tab-i"><use href="#grid"/></svg><span>View by Category</span></div>
    </div>

    <footer class="status"><span>Zoom in such that objects become larger</span><span>[468,8]</span></footer>
  </main>
</div>
</body>
</html>
```

FILE: styles.css
```css
* { box-sizing: border-box; }
html, body { margin: 0; padding: 0; }
body { width: 1920px; height: 1080px; overflow: hidden; display: flex; flex-direction: column; font: 13px/1 "DejaVu Sans", sans-serif; color: #111; background: #eeebe6; }
.defs { position: absolute; }
i, b { font-style: normal; }
svg { display: block; flex: none; }

/* GNOME top bar */
.topbar { height: 27px; flex: none; background: #1d1d1d; color: #e6e6e6; display: grid; grid-template-columns: 953px 86px 1fr; align-items: center; font: 14.500px "Noto Sans", sans-serif; }
.tb-left { display: flex; align-items: center; padding-left: 12px; }
.activities { width: 95px; letter-spacing: -.1px; }
.pn-arrow { width: 20px; height: 18px; margin-right: 4px; }
.pn { width: 29px; }
.caret { width: 0; height: 0; border: 4.500px solid transparent; border-top: 5px solid #e6e6e6; border-bottom: 0; }
.clock { white-space: nowrap; font-size: 14px; }
.tray { display: flex; align-items: center; justify-content: flex-end; padding-right: 16px; }
.t-discord { width: 17px; height: 15px; margin-right: 34px; }
.t-wifi { width: 17px; height: 15px; margin-right: 11px; }
.t-vol { width: 16px; height: 14px; margin-right: 14px; }
.t-mic { width: 11px; height: 19px; margin-right: 14px; }
.t-batt { width: 15px; height: 19px; margin-right: 12px; }

.desktop { flex: 1; display: flex; min-height: 0; }

/* dock */
.dock { width: 72px; flex: none; padding-top: 1px; display: flex; flex-direction: column; align-items: center; background: linear-gradient(#4b2129, #33152f 30%, #2a1231); }
.dk { position: relative; width: 64px; height: 68px; flex: none; display: flex; align-items: center; justify-content: center; border-radius: 6px; }
.dk-i { width: 46px; height: 46px; }
.dot::before { content: ""; position: absolute; left: 1px; top: 32px; width: 6px; height: 6px; border-radius: 50%; background: #e95420; }
.active { background: #4d3a50; }
.active .dk-i { width: 50px; height: 50px; }
.apps { margin-top: auto; margin-bottom: 19px; width: 32px; display: grid; grid-template-columns: repeat(3, 6px); gap: 6px; justify-content: center; }
.apps i { width: 6px; height: 6px; border-radius: 1px; background: #efedf0; }

/* window */
.window { flex: 1; min-width: 0; display: flex; flex-direction: column; background: #eeebe6; }
.titlebar { position: relative; height: 37px; flex: none; background: #302e2f; border-bottom: 1px solid #1c1b1b; color: #f0f0f0; display: grid; grid-template-columns: 1fr auto 1fr; align-items: center; padding-bottom: 2px; }
.title { font: 700 14.600px "Noto Sans", sans-serif; white-space: nowrap; letter-spacing: -.13px; }
.title-gap { display: inline-block; width: 54px; overflow: hidden; vertical-align: bottom; }
.wctl { display: flex; align-items: center; justify-content: flex-end; padding-right: 9px; }
.w-min { width: 10px; height: 1px; background: #eee; margin: 10px 24px 0 0; }
.w-max { width: 7px; height: 8px; border: 1px solid #eee; margin-right: 22px; }
.w-close { width: 18px; height: 19px; border-radius: 50%; background: #e9541f; color: #fff; text-align: center; font: 18px/19px "Liberation Sans", sans-serif; }
.indicator { position: absolute; left: 860px; top: 0; height: 29px; display: flex; box-shadow: 0 6px 12px rgba(0,0,0,.22); }
.ind-fox { width: 29px; background: #fff; display: flex; align-items: center; justify-content: center; }
.ind-svg { width: 23px; height: 23px; }
.ind-mic { width: 26px; background: #ffa633; display: flex; align-items: center; justify-content: center; }
.ind-micsvg { width: 12px; height: 20px; }

.menubar { height: 26px; flex: none; display: flex; align-items: center; background: linear-gradient(#eeebe6, #dfdcd7); color: #141414; }
.menu-app { width: 13px; height: 18px; margin-left: 2px; }
.m { margin-right: 12.300px; white-space: nowrap; }
.m1 { margin-left: 7px; }
.m u { text-underline-offset: 2px; }
.mdi { margin-left: auto; margin-right: 2px; display: flex; }
.mdi-b { width: 19px; height: 20px; border: 1px solid #8f8c86; border-radius: 3px; font: 11px/18px "DejaVu Sans", sans-serif; text-align: center; color: #444; }

.toolbar { position: relative; height: 30px; flex: none; display: flex; background: #eeebe6; border-top: 1px solid #fbfaf8; border-bottom: 2px solid #c9c5bf; margin-bottom: 1px; }
.tg { display: flex; align-items: center; border-right: 1px solid #fbfaf8; padding-left: 3px; }
.tg4 { padding-left: 4px; }
.tg7 { padding-left: 2px; border-right: 0; }
.grip { width: 4px; height: 17px; margin-right: 1px; background: repeating-linear-gradient(#a9a6a0 0 1px, transparent 1px 2px); }
.tc { width: 29px; height: 27px; display: flex; align-items: center; justify-content: center; }
.tc svg { width: 19px; height: 19px; }
.tsep { width: 8px; align-self: center; height: 16px; position: relative; }
.tsep::after { content: ""; position: absolute; left: 5px; top: 0; width: 1px; height: 16px; background: #d0cdc7; }
.tg2 .tsep { width: 7px; }
.tg3 .tsep { width: 7px; }
.more { width: 24px; font: 700 13px/1 "DejaVu Sans", sans-serif; text-align: right; }
.hot, .on { width: 26px; height: 26px; display: flex; align-items: center; justify-content: center; border: 1px solid #8f8c86; border-radius: 3px; }
.hot { background: #f7f5f2; }
.on { background: #cfcbc4; }
.tooltip { position: absolute; left: 374px; top: 29px; width: 60px; height: 23px; background: #ffffdc; border: 1px solid #000; font-size: 13px; line-height: 19px; padding-left: 2px; z-index: 5; box-shadow: 0 4px 10px rgba(0,0,0,.22); }

.dock-head { height: 18px; flex: none; display: flex; align-items: center; justify-content: space-between; padding: 0 0 2px 5px; border-top: 1px solid #fbfaf8; border-bottom: 1px solid #c9c5bf; }
.dbtns { display: flex; gap: 2.500px; padding-right: 1px; }
.dbtns i { width: 14px; height: 13px; border: 1px solid #8f8c86; border-radius: 3px; font-size: 9px; line-height: 11px; text-align: center; color: #444; }

.row-a { height: 100px; flex: none; display: flex; border-bottom: 2px solid #b9b5ae; }
.row-b { height: 112px; flex: none; display: flex; border-bottom: 1px solid #b9b5ae; }
.tools { width: 29px; flex: none; display: flex; flex-direction: column; align-items: center; }
.ti { width: 18px; height: 18px; }
.t-a { padding-top: 6px; gap: 10px; }
.t-b { padding-top: 12px; gap: 10px; }
.t-a .chev { margin-top: -2px; }
.chev { width: 9px; height: 9px; }
.t-b .ssep { margin: -1px 0 -4px; }
.ssep { width: 20px; height: 1px; background: #cfccc6; flex: none; }
.col { flex: 1; min-width: 0; display: flex; flex-direction: column; }
.viewrow { height: 25px; flex: none; display: flex; align-items: center; padding-left: 4px; white-space: nowrap; border-bottom: 1px solid #b9b5ae; letter-spacing: .1px; }
.radio { width: 13px; height: 13px; border-radius: 50%; background: #fff; border: 1px solid #aaa69f; margin: 0 0 0 5px; }
.radio.checked { background: radial-gradient(#444 0 3px, #ddd 3.500px); margin-left: 6px; }
.vi { width: 16px; height: 16px; margin: 0 4px 0 5px; }
.treebox { flex: 1; min-height: 0; display: flex; position: relative; padding-left: 2px; }
.tree { flex: 1; min-width: 0; overflow: hidden; background: #fff; }
.thead { height: 27px; display: flex; align-items: center; padding: 2px 0 0 4px; background: #eeebe6; border-bottom: 1px solid #b9b5ae; }
.thead-short { position: relative; border-bottom: 0; }
.thead-short::after { content: ""; position: absolute; left: 0; bottom: 0; width: 302px; height: 1px; background: #aaa69f; }
.thead-short::before { content: ""; position: absolute; left: 301px; top: 3px; width: 1px; height: 22px; background: #c4c0b9; }
.trow { height: 18px; display: flex; align-items: center; white-space: nowrap; overflow: hidden; position: relative; }
.clip { height: 11px; align-items: flex-start; }
.clip .pt { line-height: 18px; }
.selrow { background: #918d7d; color: #e8e8e0; }
.short { width: 302px; height: 9px; align-items: flex-start; }
.short span { line-height: 17px; }
.g { width: 1px; align-self: stretch; flex: none; background: repeating-linear-gradient(#999 0 1px, transparent 1px 2px); }
.stub { width: 8px; height: 1px; flex: none; background: repeating-linear-gradient(90deg, #999 0 1px, transparent 1px 2px); }
.g1 { margin-left: 31px; }
.g2 { margin-left: 19px; }
.g2.half { align-self: flex-start; height: 9px; }
.fi { width: 14px; height: 18px; margin: 0 7px 0 4px; }
.fi-s { width: 14px; height: 18px; margin: 0 3px 0 44px; }
.chip { width: 9px; height: 9px; margin-right: 10px; }
.gp1 { margin-left: 11px; }
.gp2 { margin-left: 19px; }
.fi-p { margin: 0 0 0 4px; }
.pt { margin-left: 23px; }
.procstat { height: 38px; flex: none; display: flex; align-items: center; padding: 6px 0 0 4px; white-space: nowrap; border-bottom: 1px solid #b9b5ae; }
.procstat .vi { width: 17px; height: 17px; margin: 0 10px 0 2px; }

.vscroll { width: 15px; flex: none; display: flex; flex-direction: column; margin: 2px 1px; background: #d3cfc8; }
.up, .dn { height: 14px; flex: none; background: #f4f2ee; border: 1px solid #8f8c86; border-radius: 3px; position: relative; }
.up::after, .dn::after { content: ""; position: absolute; left: 3px; top: 4px; border: 4px solid transparent; }
.up::after { border-bottom: 5px solid #111; border-top: 0; }
.dn::after { border-top: 5px solid #111; border-bottom: 0; }
.thumb { flex: 0 0 27px; background: linear-gradient(90deg, #fff, #eeebe6); border: 1px solid #bdb9b2; position: relative; }
.thumb::after { content: ""; position: absolute; left: 3px; right: 3px; top: calc(50% - 4px); height: 8px; background: repeating-linear-gradient(#bbb 0 1px, transparent 1px 3px); }
.trough { flex: 1; background: #d3cfc8; }
.t7 { flex: 0 0 7px; }
.t79 { flex: 0 0 79px; }
.vs-c .thumb { flex: 0 0 368px; }
.vs-c { margin: 1px 1px 0; }

.splitter { height: 8px; flex: none; position: relative; display: flex; justify-content: center; align-items: center; border-bottom: 1px solid #b9b5ae; }
.hgrip { width: 40px; height: 4px; background: repeating-linear-gradient(90deg, #a9a6a0 0 1px, transparent 1px 2px); }

.row-c { height: 434px; flex: none; display: flex; }
.t-c { padding-top: 4px; }
.t-c .ti { margin-bottom: 12px; }
.t-c .ssep { margin: -1px 0 8px; }
.ti-on { width: 26px; height: 26px; flex: none; display: flex; align-items: center; justify-content: center; background: #cfcbc4; border: 1px solid #8f8c86; border-radius: 3px; margin: -3px 0 7px; }
.ti-on .ti { margin: 0; }
.chev-end { margin-top: auto; margin-bottom: 2px; }
.canvas { flex: 1; min-width: 0; background: #000; margin-left: 2px; overflow: hidden; }
.canvas svg { width: 100%; height: 100%; }

.tabs { height: 27px; flex: none; display: flex; padding-left: 1px; padding-top: 1px; border-top: 1px solid #b9b5ae; }
.tab { height: 25px; display: flex; align-items: center; padding: 0 9px 0 6px; white-space: nowrap; border-right: 1px solid #bdb9b2; border-bottom: 2px solid #c9c5bf; background: #e9e6e1; }
.tab-i { width: 16px; height: 17px; margin-right: 10px; }
.x { width: 16px; margin-left: 12px; text-align: center; font: 700 15px "DejaVu Sans", sans-serif; transform: scaleX(1.100); }
.tab-on { height: 29px; background: #f2f0ec; border-bottom: 3px solid #5f8fc0; border-radius: 0 0 3px 3px; }
.splitter2 { height: 9px; flex: none; display: flex; justify-content: center; align-items: center; }

.dh2 { padding: 0 0 3px 5px; }
.vbc { height: 183px; flex: none; display: flex; padding: 0 4px; }
.vbc-col { width: 912px; flex: none; display: flex; flex-direction: column; }
.vbc h2 { height: 25px; margin: 0; font: 700 13px/22px "DejaVu Sans", sans-serif; text-align: center; flex: none; }
.vgrip { width: 4px; height: 38px; margin: 73px 6px 0; flex: none; background: repeating-linear-gradient(#a9a6a0 0 1px, transparent 1px 2px); }
.panes { display: flex; gap: 7px; height: 154px; }
.pane { border: 1px solid #b5b1aa; display: flex; height: 154px; flex: none; width: 300px; }
.pane-i { margin-right: -1px; }
.pane-main { flex: 1; min-width: 0; display: flex; flex-direction: column; }
.white { background: #fff; }
.phead { height: 27px; flex: none; display: flex; align-items: center; justify-content: space-between; padding: 2px 9px 0 5px; background: #eeebe6; border-bottom: 2px solid #aaa69f; }
.pchev { width: 9px; height: 9px; }
.irow { height: 18px; flex: none; display: flex; align-items: center; background: #fff; padding-bottom: 1px; }
.alt { background: #e8e7e3; }
.irow.selrow { background: #918d7d; }
.gi { margin-left: 30px; }
.stub-i { margin-right: 3px; }
.gt { width: 16px; height: 12px; margin-right: 7px; }
.nrow { height: 18px; display: flex; align-items: center; padding: 0 0 1px 7px; }
.plus { width: 9px; height: 9px; border: 1px solid #777; font: 9px/7px "DejaVu Sans", sans-serif; text-align: center; }
.stub-n { width: 4px; margin: 0 4px 0 1px; }
.hr { width: 15px; height: 15px; margin-right: 6px; }
.pane-prop { display: flex; flex-direction: column; width: 912px; background: #fff; }
.prophead { padding: 0; justify-content: flex-start; }
.pn-name { width: 455px; padding: 2px 0 0 4px; position: relative; border-right: 1px solid #bdb9b2; height: 100%; display: flex; align-items: center; }
.pn-val { padding: 2px 0 0 3px; }
.sort { position: absolute; left: 436px; top: 8px; border: 4px solid transparent; border-bottom: 6px solid #222; border-top: 0; }
.prow { height: 18px; flex: none; display: flex; align-items: center; padding: 0 0 1px 4px; }
.prow span:first-child { width: 451px; }
.prow span:last-child { padding-left: 3px; }
.hlut { letter-spacing: .17px; }

.btabs { height: 25px; flex: none; display: flex; margin-top: 2px; border-top: 1px solid #b9b5ae; }
.btab { height: 24px; display: flex; align-items: center; padding: 0 8px 3px 6px; white-space: nowrap; border-right: 1px solid #bdb9b2; border-bottom: 2px solid #c9c5bf; background: #e9e6e1; }
.btab .tab-i { margin-right: 11px; }
.btab-on { background: #f2f0ec; border-bottom: 3px solid #5f8fc0; height: 25px; border-radius: 0 0 3px 3px; }
.status { height: 24px; flex: none; display: flex; align-items: center; justify-content: space-between; padding: 0 5px 0 6px; }
```

FILE: app.js
```js
// Draws the technology schematic. Coordinates are in 3x units relative to a 500x440 window of the screen.
(function () {
  var host = document.getElementById('canvas');
  var seed = 20131013;
  function rnd() { seed = (seed * 1103515245 + 12345) & 0x7fffffff; return seed / 0x7fffffff; }
  function ri(a, b) { return a + Math.floor(rnd() * (b - a + 1)); }
  function pick(a) { return a[Math.floor(rnd() * a.length)]; }

  var cols = [[65,388],[130,484],[203,699],[290,880],[395,1039],[515,1210],[635,1300],[750,1270],[870,1156],[970,1062],[1060,906],[1140,741],[1205,450],[1290,184],[1385,1009]];
  var rows = [30,60,90,121,151,184,218,258,294,323,352,388,420,450,484,525,556,590,625,672,699,741,769,796,822,852,880,906,933,961,984,1009,1039,1062,1086,1113,1134,1156,1182,1210,1235,1252,1270,1300];

  function bottom(x) {
    if (x <= cols[0][0]) return cols[0][1];
    for (var i = 1; i < cols.length; i++) {
      if (x <= cols[i][0]) {
        var a = cols[i - 1], b = cols[i], t = (x - a[0]) / (b[0] - a[0]);
        return a[1] + (b[1] - a[1]) * t;
      }
    }
    return cols[cols.length - 1][1];
  }

  var red = '', thin = '', gates = '';
  function R(x, y, w, h) { red += 'M' + x + ' ' + y + 'h' + w + 'v' + h + 'h' + (-w) + 'z'; }
  function box(x, y, w, h) { thin += 'M' + x + ' ' + y + 'h' + w + 'v' + h + 'h' + (-w) + 'z'; }

  // Solid vertical wire bands: x, width, top, bottom.
  [[45,7,30,360],[98,18,30,490],[85,20,240,300],[168,24,30,680],[150,12,60,450],[225,15,30,480],[248,30,30,620],[300,22,60,700],[328,34,90,1000],
   [410,18,30,630],[435,18,200,1080],[448,54,300,900],[458,34,900,1220],[523,24,100,1150],[568,24,300,1310],[595,10,600,1310],[678,18,40,1310],[658,20,560,1000],
   [716,26,500,1000],[778,84,590,690],[786,26,700,1160],[828,18,400,800],[898,38,400,1090],[988,32,550,1000],[1033,18,300,750],[1083,34,400,750],
   [1168,24,230,380],[1238,34,30,230],[1298,34,90,250],[1330,14,520,830],[1345,20,620,930],[1358,12,480,700],[1410,3,30,1009],[610,8,80,560],[878,12,220,700],[745,8,100,500],
   [560,12,60,300],[640,10,200,620],[700,12,300,1100],[810,10,200,600],[945,10,240,900],[1010,8,240,560],[1110,10,160,420],[1225,8,240,420],
   [380,12,30,300],[480,22,30,300]
  ].forEach(function (b) { R(b[0], b[2], b[1], b[3] - b[2]); });
  // Short caps across the top row.
  [[108,24,28,16],[180,24,28,16],[255,24,30,16],[350,24,44,16],[465,24,46,16],[590,24,44,16]].forEach(function (b) { R(b[0], b[1], b[2], b[3]); });

  // Long horizontal trunks.
  [[45,633,125,4],[1100,645,270,16],[1000,705,300,4],[800,70,520,8],[560,55,130,6],[700,160,640,5],[560,230,780,6],[940,40,360,4],[700,95,620,4],[1170,720,140,8],[760,650,600,8],[420,120,300,4]
  ].forEach(function (b) { R(b[0], b[1], b[2], b[3]); });

  // Light outlines around the lower edge.
  [[170,743,75,65],[247,905,88,93],[347,1040,113,57],[800,1100,123,125],[1030,860,70,137],[1030,920,275,105],[1180,730,125,100],[1100,760,200,105],[175,700,70,40],[105,490,65,45],
   [50,365,40,35],[715,25,52,45],[825,25,60,45],[935,32,120,70],[1040,30,100,70],[1180,30,100,60],[1180,380,130,110],[1240,490,60,150],[1130,480,110,160],[460,1160,130,60],[725,1250,75,20]
  ].forEach(function (b) { box(b[0], b[1], b[2], b[3]); });

  // Routing fans filling the lower right edge.
  var fy;
  for (fy = 660; fy < 1020; fy += 18) {
    var fx = 1020 + ri(0, 90);
    if (fy > 830 && fx < 1060) fx = 1060;
    R(fx, fy, ri(90, 1305 - fx), 3);
  }
  for (fy = 490; fy < 650; fy += 22) { R(1130 + ri(0, 50), fy, ri(60, 170), 3); }

  // Stubs and gates.
  cols.forEach(function (c, ci) {
    rows.forEach(function (y) {
      if (y > c[1]) return;
      if (ci === 13 && y > 184) return;
      var x = c[0];
      if (rnd() < 0.05 && ci > 5 && ci < 14) { gates += 'M' + (x - 2) + ' ' + y + 'h4'; return; }
      var left = Math.min(ci < 9 ? 52 : 34, x - 42);
      var h = ci < 8 ? pick([3, 6, 9, 12, 15]) : pick([3, 3, 6, 9]);
      R(x - left, y - Math.floor(h / 2), left - 5, h);
      if (ci === 14) { R(x + 6, y - 1, 18, 3); } else if (rnd() < 0.6) { R(x + 5, y, ri(6, 24), 3); }
      gates += 'M' + (x - 6) + ' ' + (y - 6) + 'h9l3 3v6l-3 3h-9';
    });
  });

  // Random thin routing.
  var i, x, y, len;
  for (i = 0; i < 620; i++) {
    x = ri(50, 1400);
    y = pick(rows) + ri(-14, 14);
    len = ri(40, 260);
    if (y + 6 < bottom(x) && y + 6 < bottom(x + len) && x + len < 1410) R(x, y, len, pick([3, 3, 3, 5, 6]));
  }
  for (i = 0; i < 520; i++) {
    x = ri(50, 1400);
    y = ri(30, 1200);
    len = ri(50, 420);
    var b0 = bottom(x);
    var w = (x > 930 && y < 500) ? 3 : pick([3, 3, 3, 5, 8]);
    if (y < b0) R(x, y, w, Math.min(len, b0 - y + 10));
  }

  // Frame, ports, gates.
  var frame = 'M37 1320V20H1420V1320M1426 0V1320';
  var svg = '<svg viewBox="0 0 1800 433" shape-rendering="crispEdges"><g transform="translate(657 -4) scale(.33333)">' +
    '<path d="' + red + '" fill="#f00"/>' +
    '<path d="' + thin + '" fill="none" stroke="#f00" stroke-width="3"/>' +
    '<path d="' + gates + '" fill="none" stroke="#10ff20" stroke-width="3"/>' +
    '<path d="' + frame + '" fill="none" stroke="#4fb04f" stroke-width="3"/>' +
    '<path d="M60 25h11v10H60z" fill="none" stroke="#2ff" stroke-width="3"/>' +
    '<path d="M30 32h15v13H30zM30 627h17v12H30zM1410 16h17v12h-17z" fill="#10ff20"/>' +
    '</g></svg>';
  host.innerHTML = svg;
})();
```
